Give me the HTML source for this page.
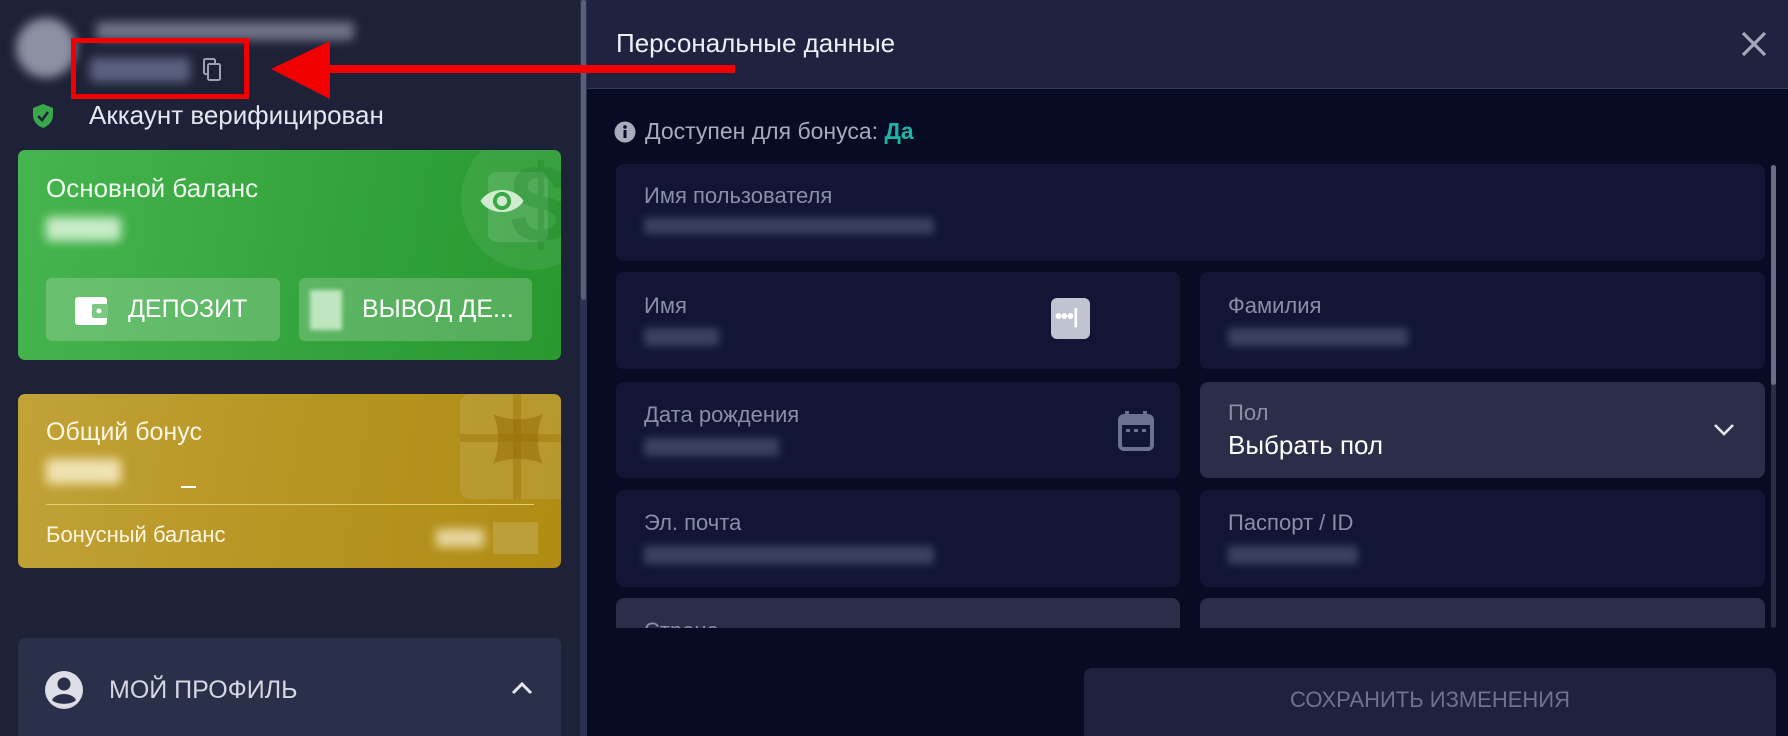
<!DOCTYPE html>
<html><head><meta charset="utf-8"><style>
*{box-sizing:border-box;margin:0;padding:0}
html,body{width:1788px;height:736px;overflow:hidden}
body{background:#070b24;font-family:"Liberation Sans",sans-serif;position:relative}
.abs{position:absolute}
.blur{filter:blur(5px)}
#side{left:0;top:0;width:580px;height:736px;background:#1e2238;overflow:hidden}
#sbar{left:580px;top:0;width:7px;height:736px;background:#2c3150}
#sthumb{left:581px;top:0;width:5px;height:300px;background:#5a5f78;border-radius:3px}
.card{border-radius:7px}
.lbl{color:#8a8ea6;font-size:22px}
.fld{background:#121634;border-radius:8px}
</style></head><body>
<div id="side" class="abs">
  <div class="abs blur" style="left:16px;top:18px;width:60px;height:60px;border-radius:50%;background:#8d90a3"></div>
  <div class="abs blur" style="left:96px;top:22px;width:258px;height:18px;background:#9497ab;border-radius:4px;opacity:.7"></div>
  <div class="abs blur" style="left:90px;top:58px;width:100px;height:24px;background:#5d6180;border-radius:3px"></div>
  <svg class="abs" style="left:200px;top:57px" width="24" height="26" viewBox="0 0 24 26"><rect x="4" y="2" width="11" height="15" rx="1.5" fill="none" stroke="#9ea1b5" stroke-width="2"/><rect x="8" y="7" width="12" height="16" rx="1.5" fill="#1e2238" stroke="#9ea1b5" stroke-width="2"/></svg>
  <div class="abs" style="left:71px;top:38px;width:178px;height:61px;border:5px solid #f20000"></div>
  <svg class="abs" style="left:30px;top:102px" width="26" height="28" viewBox="0 0 26 28"><path d="M13 2 L23 6 V13 C23 20 18 24 13 26 C8 24 3 20 3 13 V6 Z" fill="#3aa84a"/><path d="M8 14 L12 18 L18 10" fill="none" stroke="#1e2238" stroke-width="2.6"/></svg>
  <div class="abs" style="left:89px;top:100px;color:#e4e6f0;font-size:26px">Аккаунт верифицирован</div>

  <div class="abs card" style="left:18px;top:150px;width:543px;height:210px;background:linear-gradient(100deg,#47b54f,#2f9f37 70%,#28982f);overflow:hidden">
    <div class="abs" style="left:443px;top:-20px;width:140px;height:140px;border-radius:50%;background:rgba(255,255,255,.08)"></div>
    <div class="abs" style="left:470px;top:22px;width:60px;height:70px;border-radius:8px;background:rgba(255,255,255,.12)"></div>
    <div class="abs" style="left:492px;top:0px;font-size:110px;font-weight:bold;color:rgba(20,120,30,.25);line-height:1">$</div>
    <svg class="abs" style="left:460px;top:34px" width="48" height="34" viewBox="0 0 42 30"><path d="M2 15 C10 2 32 2 40 15 C32 28 10 28 2 15Z" fill="#cfeccf"/><circle cx="21" cy="15" r="8" fill="#3aa845"/><circle cx="21" cy="15" r="4.5" fill="#cfeccf"/></svg>
    <div class="abs" style="left:28px;top:23px;color:#eef8ee;font-size:26px">Основной баланс</div>
    <div class="abs blur" style="left:28px;top:67px;width:75px;height:24px;background:#c8ecc8;border-radius:4px"></div>
    <div class="abs" style="left:28px;top:128px;width:234px;height:63px;border-radius:6px;background:rgba(255,255,255,.2)"></div>
    <svg class="abs" style="left:56px;top:146px" width="36" height="30" viewBox="0 0 36 30"><rect x="1" y="1" width="32" height="28" rx="3" fill="#fff"/><rect x="18" y="8" width="16" height="14" rx="2" fill="#7cc882"/><circle cx="25" cy="15" r="2.5" fill="#fff"/></svg>
    <div class="abs" style="left:110px;top:145px;color:#fff;font-size:25px">ДЕПОЗИТ</div>
    <div class="abs" style="left:281px;top:128px;width:233px;height:63px;border-radius:6px;background:rgba(255,255,255,.2)"></div>
    <div class="abs blur" style="left:292px;top:140px;width:32px;height:40px;background:#bfe6c1;filter:blur(2px)"></div>
    <div class="abs" style="left:344px;top:145px;color:#fff;font-size:25px">ВЫВОД ДЕ...</div>
  </div>

  <div class="abs card" style="left:18px;top:394px;width:543px;height:174px;background:linear-gradient(100deg,#c2a238,#b5931f 60%,#b08c14);overflow:hidden">
    <div class="abs" style="left:442px;top:0;width:110px;height:105px;border-radius:10px;background:rgba(255,255,255,.1)"></div>
    <div class="abs" style="left:495px;top:0;width:8px;height:105px;background:rgba(160,120,10,.5)"></div>
    <div class="abs" style="left:442px;top:40px;width:110px;height:8px;background:rgba(160,120,10,.5)"></div>
    <svg class="abs" style="left:470px;top:15px" width="60" height="60" viewBox="0 0 60 60"><path d="M5 5 C20 12 40 12 55 5 C48 20 48 40 55 55 C40 48 20 48 5 55 C12 40 12 20 5 5Z" fill="rgba(150,110,5,.55)"/></svg>
    <div class="abs" style="left:28px;top:24px;color:#fdf6e0;font-size:25px">Общий бонус</div>
    <div class="abs blur" style="left:28px;top:65px;width:75px;height:25px;background:#f0e2b0;border-radius:4px"></div>
    <div class="abs" style="left:163px;top:92px;width:15px;height:2px;background:#fff"></div>
    <div class="abs" style="left:28px;top:110px;width:488px;height:1px;background:#e6cc6a"></div>
    <div class="abs" style="left:28px;top:128px;color:#fdf6e0;font-size:22px">Бонусный баланс</div>
    <div class="abs blur" style="left:418px;top:135px;width:48px;height:18px;background:#e7d7a0"></div>
    <div class="abs" style="left:475px;top:128px;width:45px;height:32px;background:rgba(255,255,255,.15)"></div>
  </div>

  <div class="abs card" style="left:18px;top:638px;width:543px;height:98px;background:#2a2f4a;border-radius:7px 7px 0 0">
    <svg class="abs" style="left:26px;top:32px" width="40" height="40" viewBox="0 0 40 40"><circle cx="20" cy="20" r="19" fill="#dcdde6"/><circle cx="20" cy="14" r="6.5" fill="#2a2f4a"/><path d="M8 30 C12 22 28 22 32 30 C28 35 12 35 8 30Z" fill="#2a2f4a"/></svg>
    <div class="abs" style="left:91px;top:38px;color:#d5d7e3;font-size:25px">МОЙ ПРОФИЛЬ</div>
    <svg class="abs" style="left:492px;top:42px" width="24" height="16" viewBox="0 0 24 16"><path d="M3 13 L12 4 L21 13" fill="none" stroke="#e6e7ee" stroke-width="3"/></svg>
  </div>
</div>
<div id="sbar" class="abs"></div><div id="sthumb" class="abs"></div>

<div class="abs" style="left:587px;top:0;width:1201px;height:89px;background:#1f2340;border-bottom:1px solid #353a58"></div>
<div class="abs" style="left:616px;top:28px;color:#eef0f6;font-size:26px">Персональные данные</div>
<svg class="abs" style="left:1740px;top:30px" width="28" height="28" viewBox="0 0 28 28"><path d="M3 3 L25 25 M25 3 L3 25" stroke="#a5a8ba" stroke-width="3.2"/></svg>

<svg class="abs" style="left:614px;top:121px" width="22" height="22" viewBox="0 0 22 22"><circle cx="11" cy="11" r="10.5" fill="#a8abbc"/><rect x="9.5" y="9" width="3" height="8" fill="#070b24"/><circle cx="11" cy="6" r="1.8" fill="#070b24"/></svg>
<div class="abs" style="left:645px;top:118px;color:#a8abbc;font-size:23px">Доступен для бонуса: <b style="color:#1fb3a5">Да</b></div>

<div class="abs" style="left:587px;top:160px;width:1201px;height:468px;overflow:hidden">
  <div class="abs fld" style="left:29px;top:4px;width:1149px;height:97px"></div>
  <div class="abs lbl" style="left:57px;top:23px">Имя пользователя</div>
  <div class="abs blur" style="left:57px;top:58px;width:290px;height:16px;background:#3c4160;filter:blur(4px)"></div>

  <div class="abs fld" style="left:29px;top:112px;width:564px;height:97px"></div>
  <div class="abs lbl" style="left:57px;top:133px">Имя</div>
  <div class="abs blur" style="left:57px;top:168px;width:75px;height:18px;background:#3c4160;filter:blur(4px)"></div>
  <div class="abs" style="left:464px;top:138px;width:39px;height:41px;border-radius:6px;background:#bfc3d2"></div>
  <div class="abs" style="left:468px;top:146px;color:#fff;font-size:20px;font-weight:bold;letter-spacing:-1px">•••|</div>

  <div class="abs fld" style="left:613px;top:112px;width:565px;height:97px"></div>
  <div class="abs lbl" style="left:641px;top:133px">Фамилия</div>
  <div class="abs blur" style="left:641px;top:168px;width:180px;height:18px;background:#3c4160;filter:blur(4px)"></div>

  <div class="abs fld" style="left:29px;top:222px;width:564px;height:96px"></div>
  <div class="abs lbl" style="left:57px;top:242px">Дата рождения</div>
  <div class="abs blur" style="left:57px;top:278px;width:135px;height:18px;background:#3c4160;filter:blur(4px)"></div>
  <svg class="abs" style="left:531px;top:250px" width="36" height="42" viewBox="0 0 36 42"><rect x="2" y="6" width="32" height="33" rx="4" fill="none" stroke="#6d7190" stroke-width="4"/><rect x="2" y="6" width="32" height="9" fill="#6d7190"/><rect x="7" y="1" width="4" height="8" fill="#6d7190"/><rect x="25" y="1" width="4" height="8" fill="#6d7190"/><rect x="8" y="19" width="4" height="3" fill="#6d7190"/><rect x="16" y="19" width="4" height="3" fill="#6d7190"/><rect x="24" y="19" width="4" height="3" fill="#6d7190"/></svg>

  <div class="abs" style="left:613px;top:222px;width:565px;height:96px;background:#2a2e48;border-radius:8px"></div>
  <div class="abs lbl" style="left:641px;top:240px;color:#8c90a6">Пол</div>
  <div class="abs" style="left:641px;top:270px;color:#fff;font-size:26px">Выбрать пол</div>
  <svg class="abs" style="left:1125px;top:262px" width="24" height="16" viewBox="0 0 24 16"><path d="M3 3 L12 12 L21 3" fill="none" stroke="#e6e7ee" stroke-width="2.6"/></svg>

  <div class="abs fld" style="left:29px;top:330px;width:564px;height:97px"></div>
  <div class="abs lbl" style="left:57px;top:350px">Эл. почта</div>
  <div class="abs blur" style="left:57px;top:386px;width:290px;height:18px;background:#3c4160;filter:blur(4px)"></div>

  <div class="abs fld" style="left:613px;top:330px;width:565px;height:97px"></div>
  <div class="abs lbl" style="left:641px;top:350px">Паспорт / ID</div>
  <div class="abs blur" style="left:641px;top:386px;width:130px;height:18px;background:#3c4160;filter:blur(4px)"></div>

  <div class="abs" style="left:29px;top:438px;width:564px;height:60px;background:#2a2e48;border-radius:8px"></div>
  <div class="abs lbl" style="left:57px;top:458px">Страна</div>
  <div class="abs" style="left:613px;top:438px;width:565px;height:60px;background:#2a2e48;border-radius:8px"></div>
</div>
<div class="abs" style="left:1771px;top:165px;width:5px;height:220px;background:#6a6e88;border-radius:3px"></div>
<div class="abs" style="left:1771px;top:165px;width:5px;height:463px;background:rgba(106,110,136,.35);border-radius:3px"></div>

<div class="abs" style="left:1084px;top:668px;width:692px;height:68px;background:#1e223d;border-radius:8px 8px 0 0"></div>
<div class="abs" style="left:1084px;top:687px;width:692px;text-align:center;color:#6f7390;font-size:22px">СОХРАНИТЬ ИЗМЕНЕНИЯ</div>

<div class="abs" style="left:325px;top:65px;width:410px;height:8px;background:#f20000"></div>
<svg class="abs" style="left:270px;top:40px" width="62" height="62" viewBox="0 0 62 62"><path d="M1 29 L60 1 L60 59 Z" fill="#f20000"/></svg>
</body></html>
